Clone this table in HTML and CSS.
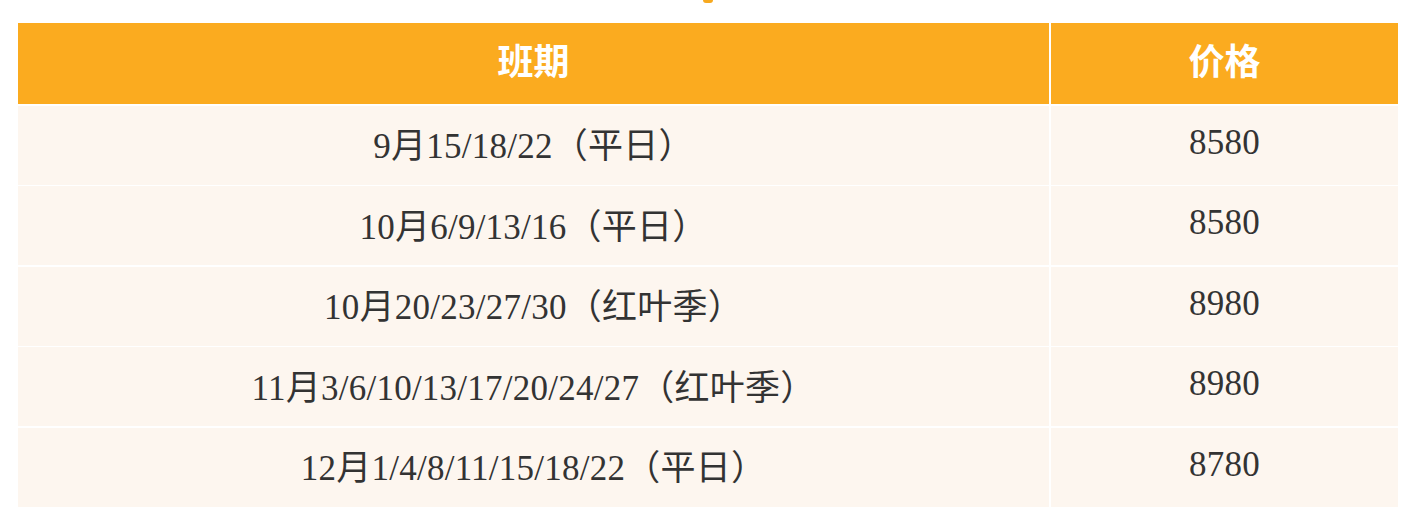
FILE: index.html
```html
<!DOCTYPE html>
<html lang="zh-CN">
<head>
<meta charset="utf-8">
<title>班期价格</title>
<link rel="stylesheet" href="styles.css">
</head>
<body>
<div class="page">
  <div class="title-tail"></div>
  <div class="table">
    <div class="cell head">班期</div>
    <div class="cell head">价格</div>
    <div class="cell">9月15/18/22（平日）</div>
    <div class="cell">8580</div>
    <div class="cell">10月6/9/13/16（平日）</div>
    <div class="cell">8580</div>
    <div class="cell">10月20/23/27/30（红叶季）</div>
    <div class="cell">8980</div>
    <div class="cell">11月3/6/10/13/17/20/24/27（红叶季）</div>
    <div class="cell">8980</div>
    <div class="cell">12月1/4/8/11/15/18/22（平日）</div>
    <div class="cell">8780</div>
  </div>
</div>
</body>
</html>
```

FILE: styles.css
```css
html, body {
  margin: 0;
  padding: 0;
  background: #ffffff;
}

.page {
  padding: 0 6px 0 18px;
  display: flex;
  flex-direction: column;
}

.title-tail {
  align-self: center;
  width: 10px;
  height: 3px;
  background: #f7a91f;
  border-radius: 0 0 5px 5px;
  margin-bottom: 20px;
}

.table {
  display: grid;
  grid-template-columns: 1031px 347px;
  grid-template-rows: 81px repeat(5, 79px);
  column-gap: 2px;
  row-gap: 1.5px;
}

.cell {
  display: flex;
  align-items: center;
  justify-content: center;
  background: #fdf6ef;
  color: #333333;
  font-family: "Liberation Serif", "Noto Sans CJK SC", serif;
  font-size: 35px;
  letter-spacing: 0.25px;
  padding-bottom: 5px;
}

.cell.head {
  background: #fbab1f;
  color: #ffffff;
  font-family: "Noto Sans CJK SC", "Noto Sans", sans-serif;
  font-weight: 700;
  font-size: 36px;
  letter-spacing: 0;
  padding-bottom: 10px;
}
```
